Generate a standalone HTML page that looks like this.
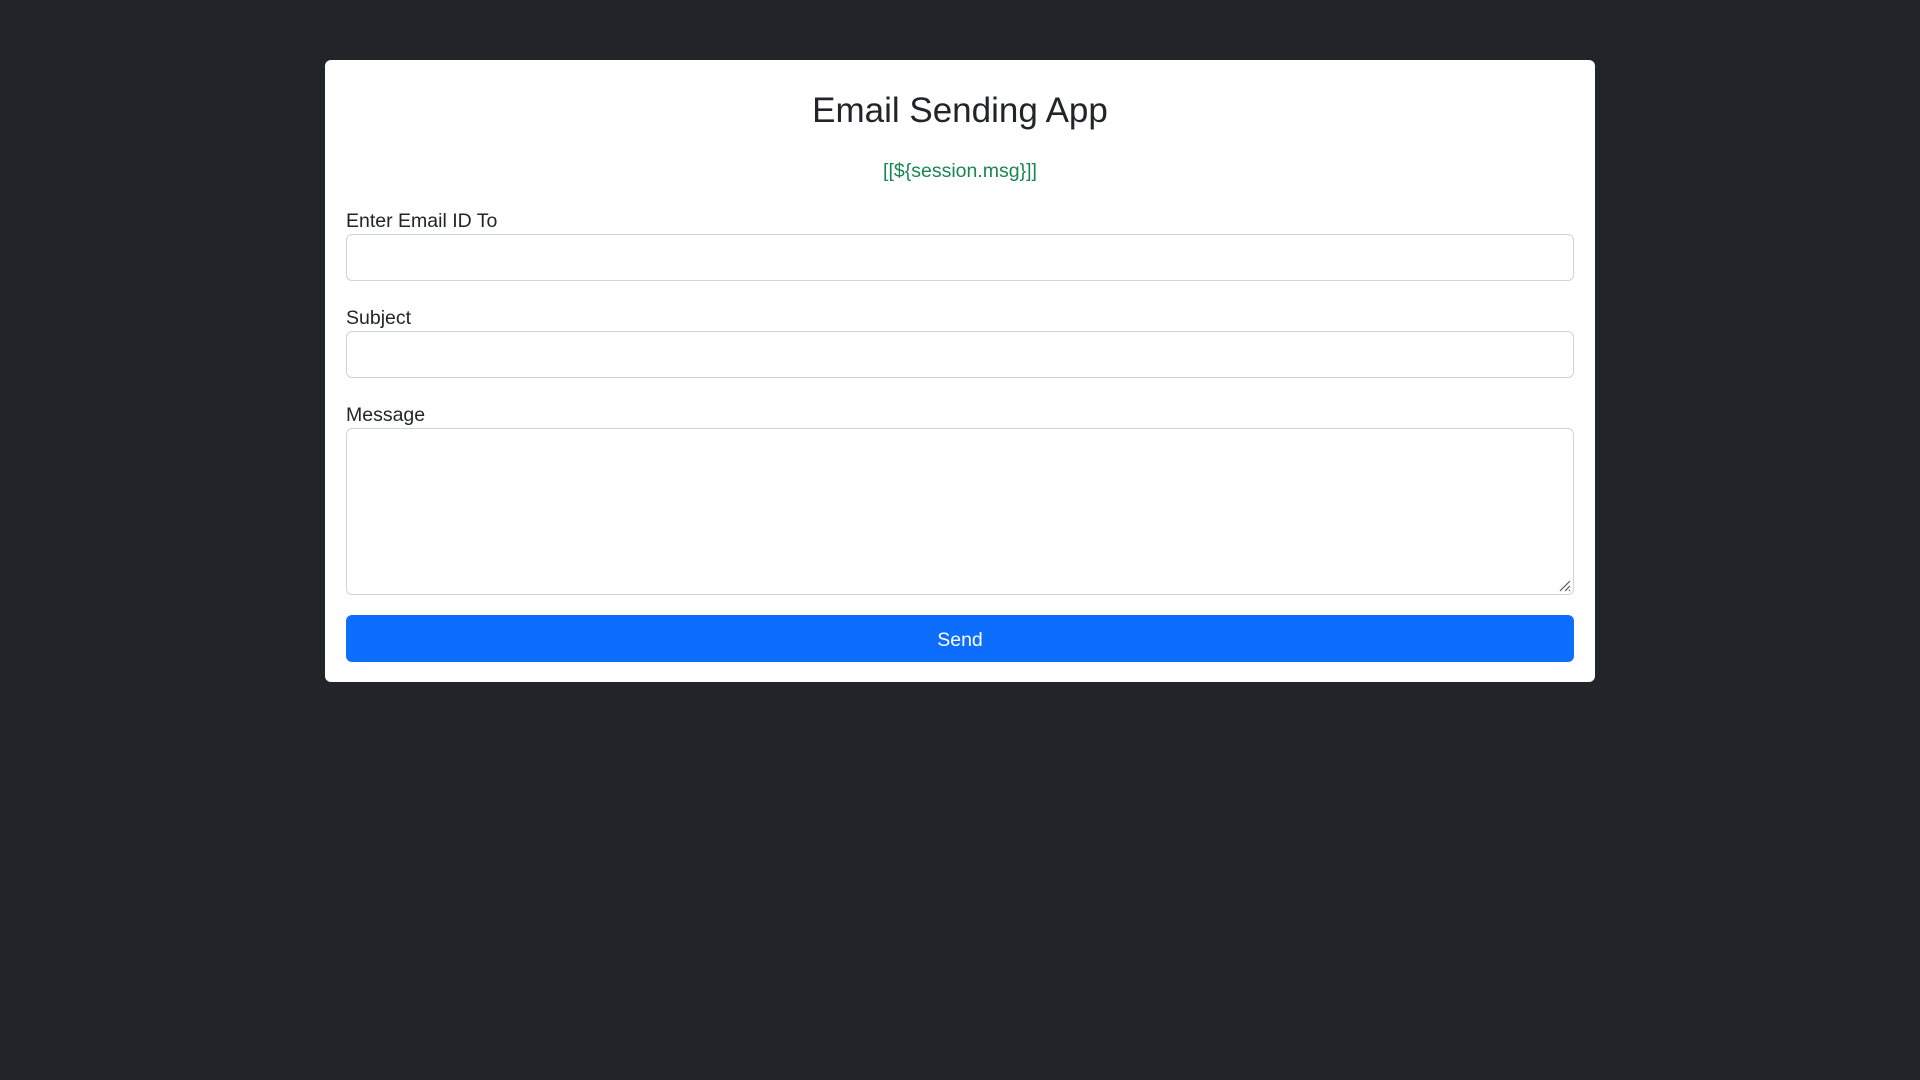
<!DOCTYPE html>
<html><head><meta charset="utf-8"><style>
html,body{margin:0;padding:0;background:#212529;width:1920px;height:1080px;overflow:hidden;font-family:"Liberation Sans",sans-serif;color:#212529}
.card{position:absolute;left:325px;top:60px;width:1270px;height:622px;background:#fff;border-radius:6px}
.t{position:absolute;left:0;right:0;top:88px;text-align:center;font-size:35px;line-height:46px;margin:0;font-weight:400}
.box{position:absolute;left:346px;width:1226px;border:1px solid #ced4da;border-radius:6px;background:#fff}
.lbl{position:absolute;left:346px;font-size:19.5px;line-height:24px}
</style></head><body>
<div class="card"></div>
<h1 class="t">Email Sending App</h1>
<div style="position:absolute;left:0;right:0;top:159px;text-align:center;color:#198754;font-size:19.5px;line-height:24px">[[${session.msg}]]</div>
<div class="lbl" style="top:209px">Enter Email ID To</div>
<div class="box" style="top:234px;height:45px"></div>
<div class="lbl" style="top:306px">Subject</div>
<div class="box" style="top:331px;height:45px"></div>
<div class="lbl" style="top:403px">Message</div>
<div class="box" style="top:428px;height:165px"><svg style="position:absolute;right:2px;bottom:2px" width="14" height="14"><path d="M13 3L3 13M13 8L8 13M13 12L12 13" stroke="#555" stroke-width="1.2"/></svg></div>
<div style="position:absolute;left:346px;top:615px;width:1228px;height:47px;background:#0d6efd;border-radius:6px;color:#fff;font-size:19.5px;line-height:50px;text-align:center">Send</div>
</body></html>
